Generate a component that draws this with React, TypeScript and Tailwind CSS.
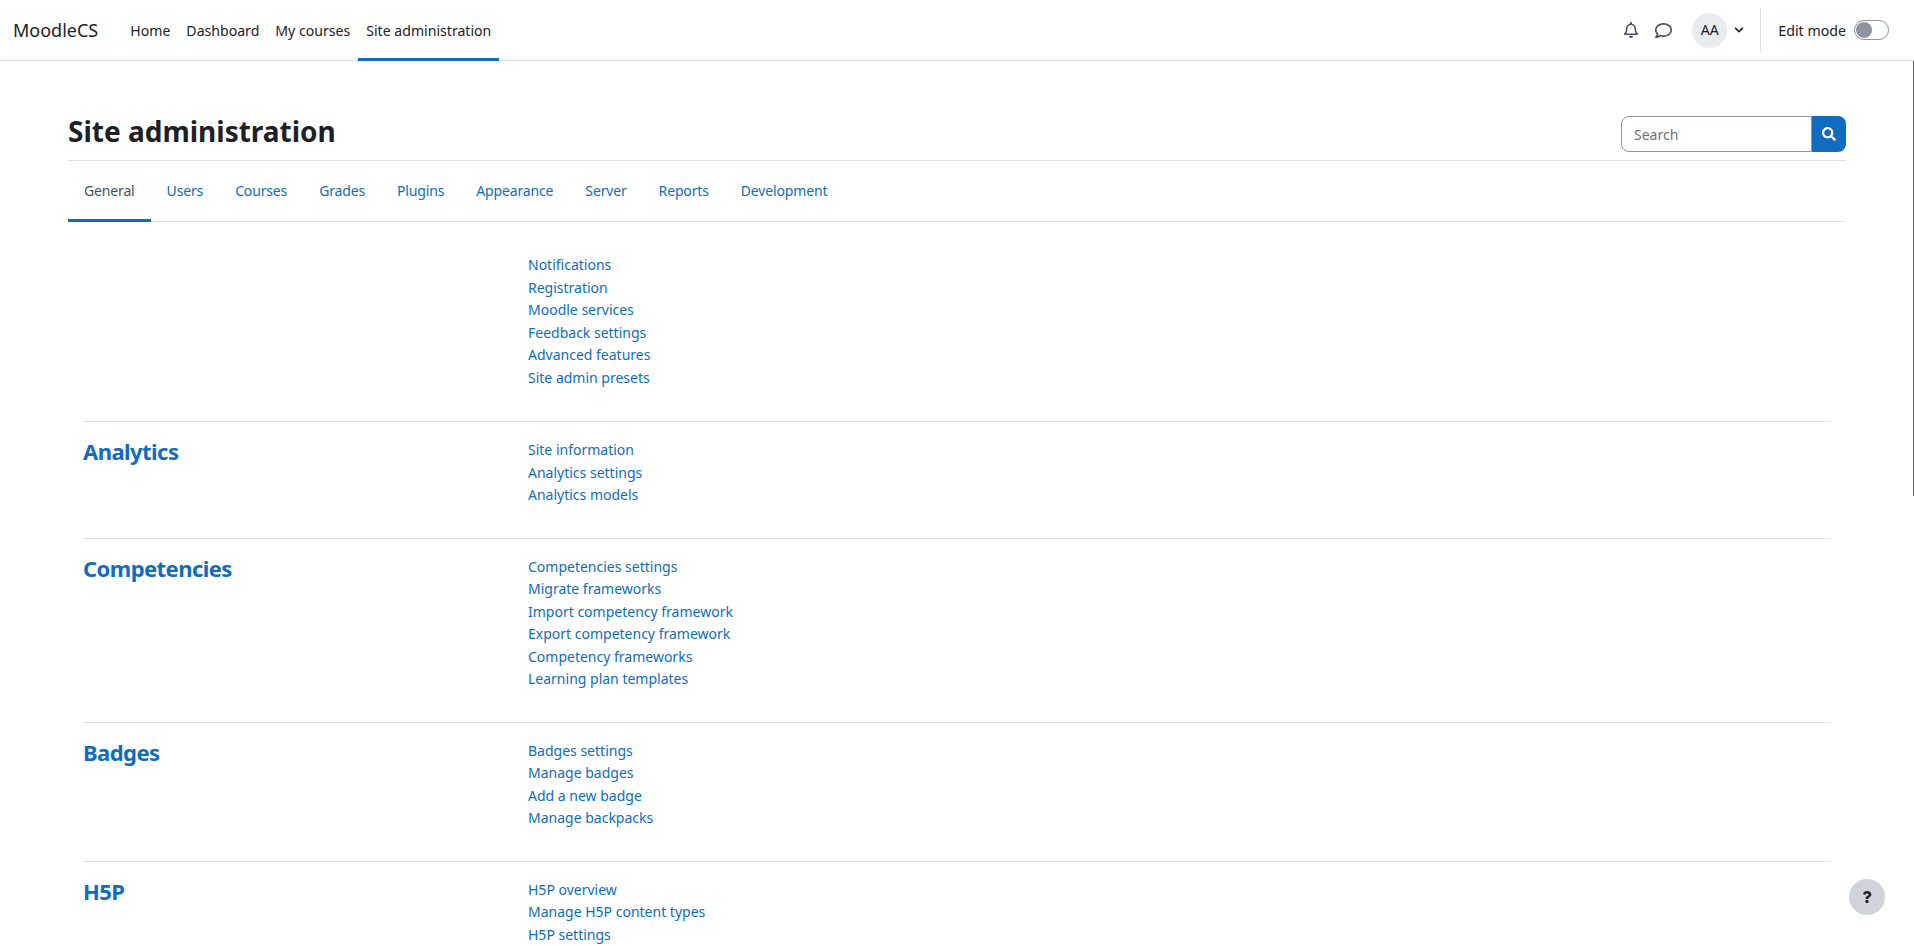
import { FaRegBell, FaRegComment, FaChevronDown, FaSearch, FaQuestion } from "react-icons/fa";

const topLinks = ["Home", "Dashboard", "My courses"];
const tabs = ["Users", "Courses", "Grades", "Plugins", "Appearance", "Server", "Reports", "Development"];

const sections = [
  {
    title: "",
    links: ["Notifications", "Registration", "Moodle services", "Feedback settings", "Advanced features", "Site admin presets"],
  },
  { title: "Analytics", links: ["Site information", "Analytics settings", "Analytics models"] },
  {
    title: "Competencies",
    links: [
      "Competencies settings",
      "Migrate frameworks",
      "Import competency framework",
      "Export competency framework",
      "Competency frameworks",
      "Learning plan templates",
    ],
  },
  { title: "Badges", links: ["Badges settings", "Manage badges", "Add a new badge", "Manage backpacks"] },
  { title: "H5P", links: ["H5P overview", "Manage H5P content types", "H5P settings"] },
];

function Section({ title, links, first }: { title: string; links: string[]; first: boolean }) {
  return (
    <div className={first ? "flex pt-[25px] pb-[32px]" : "flex border-t border-[#dee2e6] pt-[10px] pb-[31px]"}>
      <h3 className="w-[445px] shrink-0 text-[22px] leading-[38px] font-bold tracking-[-0.55px] text-[#0f6cbf]">{title}</h3>
      <ul className="flex flex-col pt-[7px]">
        {links.map((l) => (
          <li key={l} className="text-[14px] leading-[22.5px] text-[#0f6cbf]">
            {l}
          </li>
        ))}
      </ul>
    </div>
  );
}

export default function App() {
  return (
    <div className="relative h-screen overflow-hidden bg-white font-['Noto_Sans','Open_Sans',sans-serif] text-[#1d2125]">
      <nav className="flex h-[61px] items-stretch border-b border-[#dee2e6] pl-[13px] pr-[25px]">
        <span className="mr-[24px] flex items-center text-[18px]">MoodleCS</span>
        <div className="flex items-stretch text-[14.1px]">
          {topLinks.map((l) => (
            <a key={l} className="flex items-center px-2 pt-px">
              {l}
            </a>
          ))}
          <a className="-mb-px flex items-center border-b-[3px] border-[#0f6cbf] px-2 pt-[3px]">Site administration</a>
        </div>
        <div className="ml-auto flex items-center">
          <FaRegBell size={16} className="mr-[16px] text-[#495057]" />
          <FaRegComment size={17} className="mr-[20px] text-[#495057]" />
          <span className="flex h-[35px] w-[35px] items-center justify-center rounded-full bg-[#e9ecef] text-[14.2px]">AA</span>
          <FaChevronDown size={10} className="ml-[7px] mr-[16px]" />
          <div className="mr-[17px] h-[45px] w-px bg-[#dee2e6]" />
          <span className="mr-[8px] pt-px text-[14.2px]">Edit mode</span>
          <span className="flex h-[20px] w-[35px] items-center rounded-full border border-[#8f959e] pl-px">
            <span className="h-[16px] w-[16px] rounded-full bg-[#8f959e]" />
          </span>
        </div>
      </nav>

      <main className="px-[68px]">
        <header className="flex h-[100px] items-end justify-between border-b border-[#dee2e6] pb-[8px]">
          <h1 className="text-[28px] leading-[42px] font-bold">Site administration</h1>
          <div className="flex h-[36px] w-[225px]">
            <div className="flex flex-1 items-center rounded-l-[8px] border border-[#8f959e] pl-[12px] text-[14px] text-[#6a737b]">Search</div>
            <button className="flex w-[34px] items-center justify-center rounded-r-[8px] bg-[#0f6cbf] text-white">
              <FaSearch size={14} />
            </button>
          </div>
        </header>

        <div className="flex h-[61px] items-stretch border-b border-[#dee2e6] pb-px text-[14px] tracking-[-0.15px]">
          <a className="-mb-[2px] flex items-center border-b-[3px] border-[#0f6cbf] px-4 text-[#495057]">General</a>
          {tabs.map((t) => (
            <a key={t} className="flex items-center px-4 text-[#0f6cbf]">
              {t}
            </a>
          ))}
        </div>

        <div className="px-[15px]">
          {sections.map((s, i) => (
            <Section key={s.title} title={s.title} links={s.links} first={i === 0} />
          ))}
        </div>
      </main>

      {/* thin scrollbar thumb along the right edge */}
      <div className="absolute top-[61px] right-0 h-[435px] w-px bg-[#6b6b6b]" />

      <button className="absolute right-[29px] bottom-[31px] flex h-[36px] w-[36px] items-center justify-center rounded-full bg-[#ced4da]">
        <FaQuestion size={12} />
      </button>
    </div>
  );
}
